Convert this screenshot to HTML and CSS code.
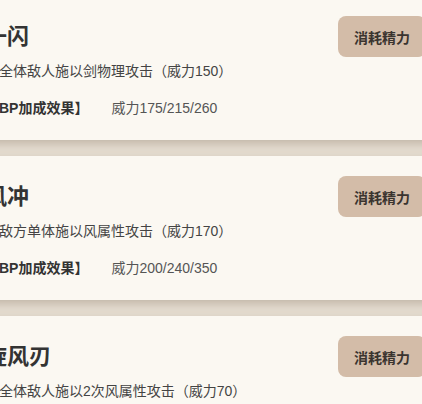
FILE: index.html
```html
<!DOCTYPE html>
<html lang="zh-CN">
<head>
<meta charset="utf-8">
<title>技能列表</title>
<link rel="stylesheet" href="styles.css">
</head>
<body>
<div class="list">
  <div class="card">
    <div class="head">
      <h2 class="title">一闪</h2>
      <button class="cost">消耗精力</button>
    </div>
    <p class="desc">对全体敌人施以剑物理攻击（威力150）</p>
    <p class="bp"><span class="bp-label">【BP加成效果】</span><span class="bp-value">威力175/215/260</span></p>
  </div>
  <div class="card">
    <div class="head">
      <h2 class="title">风冲</h2>
      <button class="cost">消耗精力</button>
    </div>
    <p class="desc">对敌方单体施以风属性攻击（威力170）</p>
    <p class="bp"><span class="bp-label">【BP加成效果】</span><span class="bp-value">威力200/240/350</span></p>
  </div>
  <div class="card">
    <div class="head">
      <h2 class="title">旋风刃</h2>
      <button class="cost">消耗精力</button>
    </div>
    <p class="desc">对全体敌人施以2次风属性攻击（威力70）</p>
    <p class="bp"><span class="bp-label">【BP加成效果】</span><span class="bp-value">威力90/110/130</span></p>
  </div>
</div>
</body>
</html>
```
FILE: styles.css
```css
html, body {
  margin: 0;
  padding: 0;
  overflow: hidden;
}
body {
  background: #e8e0d4;
  font-family: "Liberation Sans", "Noto Sans CJK SC", sans-serif;
  color: #333;
}
.list {
  display: flex;
  flex-direction: column;
  gap: 16px;
  width: 473px;
  margin-left: -31px;
  margin-top: -4px;
}
.card {
  background: #fbf8f2;
  height: 144px;
  box-sizing: border-box;
  padding: 20px 16px 0 16px;
  box-shadow: 0 4px 10px rgba(90, 70, 45, 0.28);
}
.head {
  display: flex;
  align-items: center;
  justify-content: space-between;
  height: 41px;
}
.title {
  margin: 0;
  font-size: 22px;
  font-weight: bold;
  color: #333;
  line-height: 28px;
}
.cost {
  height: 41px;
  padding: 0 16px;
  border: none;
  border-radius: 8px;
  background: #d3bca8;
  color: #3a342f;
  font-family: "Liberation Sans", "Noto Sans CJK SC", sans-serif;
  font-size: 14px;
  font-weight: bold;
}
.desc {
  margin: 4px 0 0;
  font-size: 14px;
  line-height: 20px;
  color: #444;
}
.bp {
  margin: 17px 0 0;
  font-size: 14px;
  line-height: 20px;
  display: flex;
  gap: 23px;
}
.bp-label {
  font-weight: bold;
  color: #333;
}
.bp-value {
  color: #555;
}
```
